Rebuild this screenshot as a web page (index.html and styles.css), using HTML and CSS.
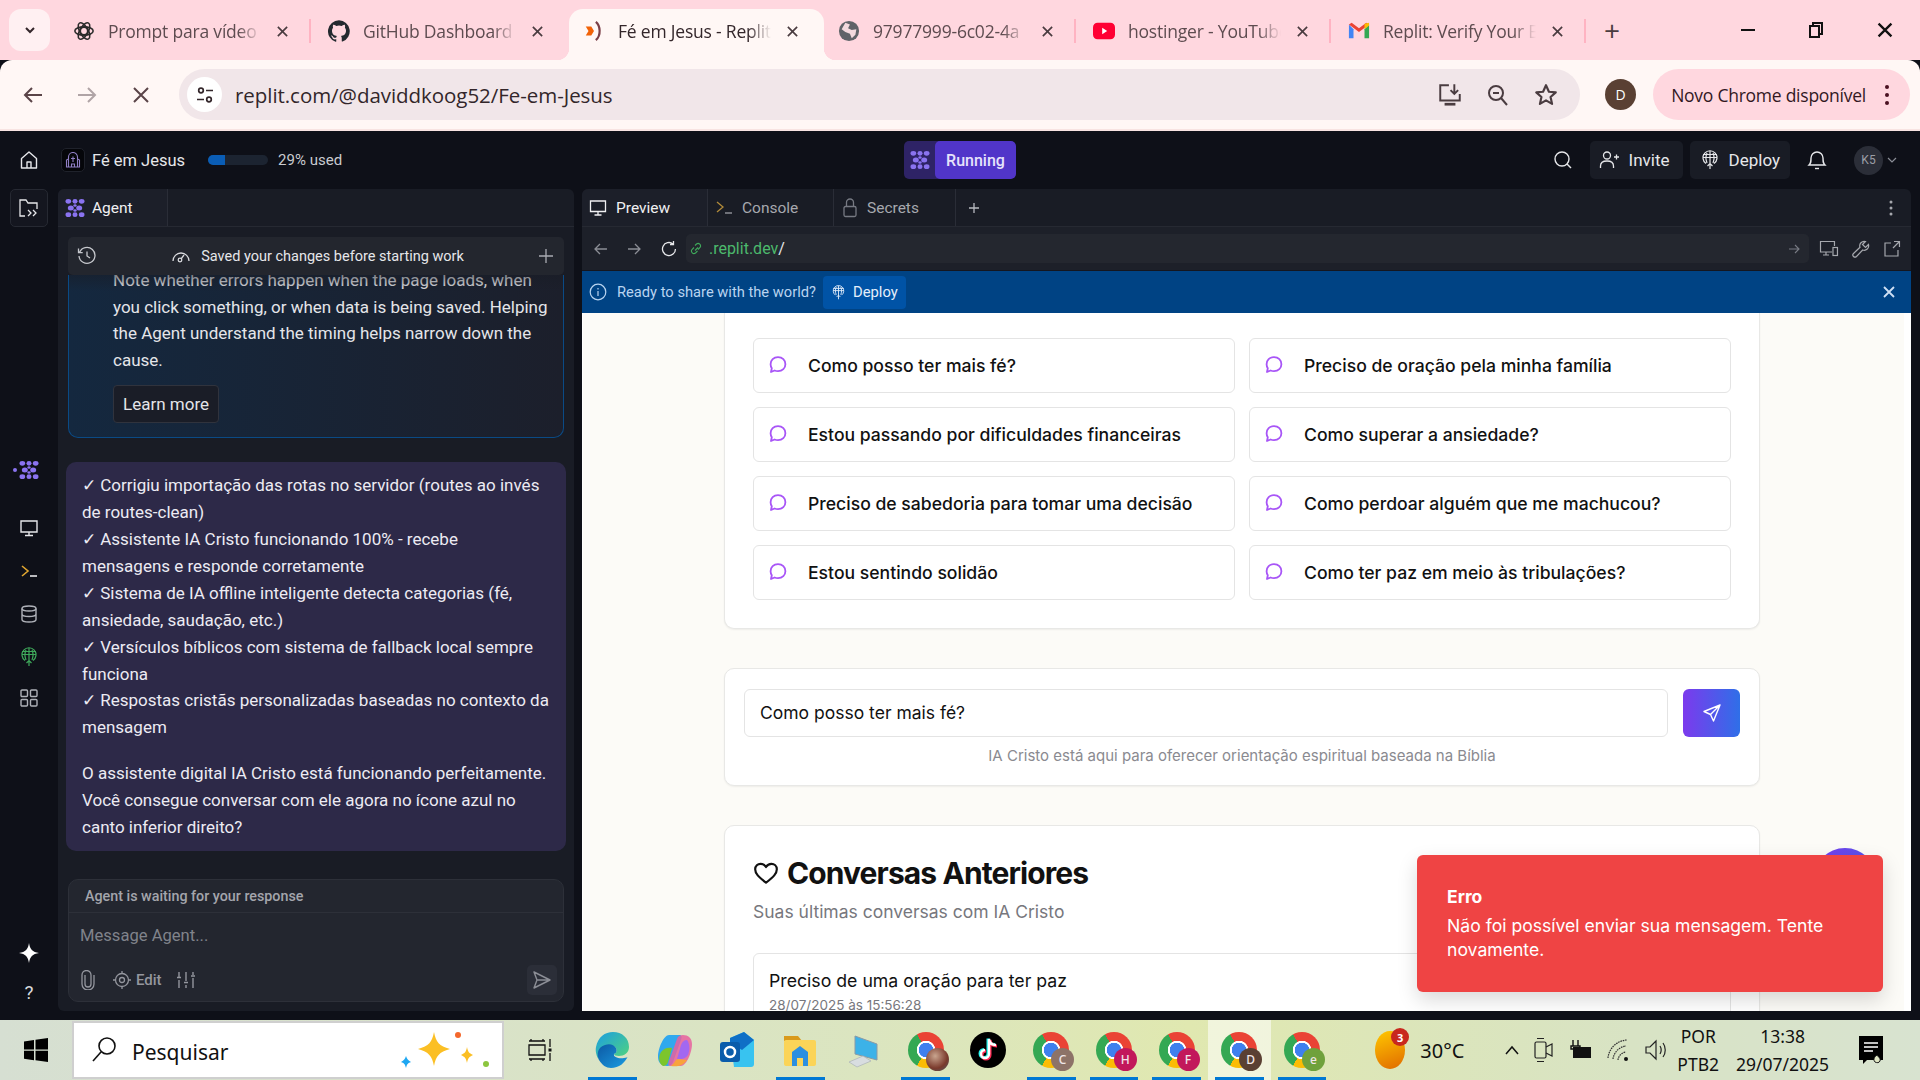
FILE: index.html
```html
<!DOCTYPE html>
<html lang="pt-BR">
<head>
    <meta charset="UTF-8">
    <title>Fé em Jesus - Replit</title>
    <link rel="stylesheet" href="styles.css">
</head>
<body>
    <svg class="defs" width="0" height="0">
        <symbol id="agent" viewBox="0 0 24 24">
            <g fill="currentColor">
                <ellipse cx="4" cy="4" rx="3.4" ry="2.8"/><ellipse cx="12" cy="4" rx="3" ry="2.8"/><ellipse cx="20" cy="4" rx="3.4" ry="2.8"/>
                <ellipse cx="7" cy="12" rx="3.6" ry="3"/><ellipse cx="17" cy="12" rx="3.6" ry="3"/><ellipse cx="12" cy="9" rx="2" ry="1.5"/><ellipse cx="12" cy="15" rx="2" ry="1.5"/>
                <ellipse cx="4" cy="20" rx="3.4" ry="2.8"/><ellipse cx="12" cy="20" rx="3" ry="2.8"/><ellipse cx="20" cy="20" rx="3.4" ry="2.8"/>
            </g>
        </symbol>
        <symbol id="bubble" viewBox="0 0 20 20">
            <path d="M10 2.2c4.4 0 7.4 3 7.4 7s-3 7-7.4 7c-1.100 0-2.400-.2-3.400-.7L3 17l.8-3.800C3 12 2.600 10.600 2.600 9.200c0-4 3-7 7.400-7z" fill="none" stroke="#a855f7" stroke-width="1.800" stroke-linejoin="round"/>
        </symbol>
        <symbol id="globe-up" viewBox="0 0 20 20">
            <g fill="none" stroke="currentColor" stroke-width="1.200">
                <path d="M6 13.500A7 7 0 1 1 14 13.500"/><path d="M3 7.500h14M3 4.500h14"/><path d="M10 1v18M7 3c-1.500 3-1.500 6 0 10M13 3c1.500 3 1.500 6 0 10M7.500 16L10 13.500 12.500 16"/>
            </g>
        </symbol>
        <symbol id="close" viewBox="0 0 14 14">
            <path d="M2 2l10 10M12 2L2 12" fill="none" stroke="currentColor" stroke-width="1.800"/>
        </symbol>
        <linearGradient id="edge-top" x1="0" y1="0" x2="1" y2="1">
            <stop offset="0" stop-color="#1b9de2"/><stop offset="1" stop-color="#52d67a"/>
        </linearGradient>
        <linearGradient id="edge-low" x1="0" y1="0" x2="1" y2="1">
            <stop offset="0" stop-color="#0c59a4"/><stop offset="1" stop-color="#1b9de2"/>
        </linearGradient>
    </svg>

    <div class="tabstrip">
        <div class="tab-menu">
            <svg width="14" height="14" viewBox="0 0 14 14"><path d="M3 5l4 4 4-4" fill="none" stroke="#33262a" stroke-width="2"/></svg>
        </div>
        <div class="tab">
            <svg class="favicon" viewBox="0 0 24 24"><g fill="none" stroke="#2b2b2b" stroke-width="1.700"><circle cx="12" cy="12" r="4"/><ellipse cx="12" cy="12" rx="10" ry="4.500"/><ellipse cx="12" cy="12" rx="10" ry="4.500" transform="rotate(60 12 12)"/><ellipse cx="12" cy="12" rx="10" ry="4.500" transform="rotate(120 12 12)"/></g></svg>
            <span class="tab-title">Prompt para vídeo</span>
            <svg class="tab-x"><use href="#close"/></svg>
            <i class="tab-sep"></i>
        </div>
        <div class="tab">
            <svg class="favicon" viewBox="0 0 16 16"><path fill="#24292f" d="M8 .2a8 8 0 0 0-2.500 15.600c.4.100.5-.2.500-.4v-1.400c-2.200.5-2.700-1-2.700-1-.4-.9-.9-1.200-.9-1.200-.7-.5.100-.5.100-.5.800.1 1.200.8 1.200.8.700 1.200 1.900.9 2.300.7.100-.5.300-.9.500-1.100-1.800-.2-3.600-.9-3.600-4 0-.9.300-1.600.8-2.100-.1-.2-.4-1 .1-2.100 0 0 .7-.2 2.200.8a7.600 7.600 0 0 1 4 0c1.500-1 2.200-.8 2.200-.8.400 1.100.2 1.900.1 2.100.5.600.8 1.300.8 2.100 0 3.100-1.900 3.700-3.700 3.900.3.300.6.800.6 1.500v2.200c0 .2.100.5.600.4A8 8 0 0 0 8 .2z"/></svg>
            <span class="tab-title">GitHub Dashboard</span>
            <svg class="tab-x"><use href="#close"/></svg>
        </div>
        <div class="tab tab-active">
            <svg class="favicon" viewBox="0 0 24 24"><path d="M3 7h6l3 5-3 5H3l3-5z" fill="#f26207"/><path d="M14 2c5 4 6 15 0 20" fill="none" stroke="#7b3f48" stroke-width="2.400"/></svg>
            <span class="tab-title">Fé em Jesus - Replit</span>
            <svg class="tab-x"><use href="#close"/></svg>
        </div>
        <div class="tab">
            <svg class="favicon" viewBox="0 0 24 24"><circle cx="12" cy="12" r="11" fill="#5f6368"/><path d="M8 3l5 2-2 4 4 2 5-1-1 6-4 4-2-5-5-2-4-3z" fill="#f2d9dd"/></svg>
            <span class="tab-title">97977999-6c02-4a</span>
            <svg class="tab-x"><use href="#close"/></svg>
            <i class="tab-sep"></i>
        </div>
        <div class="tab">
            <svg class="favicon" viewBox="0 0 24 24"><rect y="3" width="24" height="18" rx="5" fill="#ff0033"/><path d="M10 8.500l5.500 3.500-5.500 3.500z" fill="#fff"/></svg>
            <span class="tab-title">hostinger - YouTube</span>
            <svg class="tab-x"><use href="#close"/></svg>
            <i class="tab-sep"></i>
        </div>
        <div class="tab">
            <svg class="favicon" viewBox="0 0 24 24"><path d="M1 5v15h5V10z" fill="#4285f4"/><path d="M23 5v15h-5V10z" fill="#34a853"/><path d="M1 5l11 8 11-8-3-2-8 6-8-6z" fill="#ea4335"/><path d="M18 4l5-1v3l-5 4z" fill="#fbbc04"/></svg>
            <span class="tab-title">Replit: Verify Your Email</span>
            <svg class="tab-x"><use href="#close"/></svg>
            <i class="tab-sep"></i>
        </div>
        <div class="new-tab">+</div>
        <div class="win-btns">
            <svg width="16" height="16" viewBox="0 0 16 16"><path d="M1 8h14" stroke="#111" stroke-width="2"/></svg>
            <svg width="16" height="18" viewBox="0 0 16 18"><g fill="none" stroke="#111" stroke-width="2"><rect x="2" y="5" width="9" height="11"/><path d="M5 5V2h9v11h-3"/></g></svg>
            <svg width="18" height="18" viewBox="0 0 14 14"><use href="#close" color="#111"/></svg>
        </div>
    </div>

    <div class="toolbar">
        <svg class="nav-ico" viewBox="0 0 24 24"><path d="M21 12H4M11 5l-7 7 7 7" fill="none" stroke="#5a4448" stroke-width="2"/></svg>
        <svg class="nav-ico" viewBox="0 0 24 24"><path d="M3 12h17M13 5l7 7-7 7" fill="none" stroke="#b0a4a6" stroke-width="2"/></svg>
        <svg class="nav-ico" viewBox="0 0 24 24"><path d="M5 5l14 14M19 5L5 19" fill="none" stroke="#5a4448" stroke-width="2"/></svg>
        <div class="omnibox">
            <span class="site-info">
                <svg width="20" height="20" viewBox="0 0 20 20"><g fill="none" stroke="#33262a" stroke-width="1.700"><circle cx="6" cy="5.500" r="2.300"/><path d="M11 5.500h7M2 14.500h7"/><circle cx="14" cy="14.500" r="2.300"/></g></svg>
            </span>
            <span class="omni-url">replit.com/@daviddkoog52/Fe-em-Jesus</span>
            <span class="omni-icons">
                <svg width="26" height="26" viewBox="0 0 24 24"><g fill="none" stroke="#4a3c40" stroke-width="1.800"><path d="M11 3H3v14h18v-6M16 2v9M12.500 7.500L16 11l3.500-3.500"/><path d="M7 20.500h10" stroke-width="2.500"/></g></svg>
                <svg width="24" height="24" viewBox="0 0 24 24"><g fill="none" stroke="#4a3c40" stroke-width="2"><circle cx="10" cy="10" r="7"/><path d="M15 15l6 7M7 10h6"/></g></svg>
                <svg width="26" height="26" viewBox="0 0 24 24"><path d="M12 3l2.700 6 6.300.6-4.800 4.300 1.400 6.300L12 17l-5.600 3.200 1.400-6.300L3 9.600 9.300 9z" fill="none" stroke="#4a3c40" stroke-width="2" stroke-linejoin="round"/></svg>
            </span>
        </div>
        <span class="chrome-avatar">D</span>
        <div class="chrome-update">
            <span>Novo Chrome disponível</span>
            <svg width="6" height="22" viewBox="0 0 6 22"><g fill="#4a1020"><circle cx="3" cy="3" r="2"/><circle cx="3" cy="11" r="2"/><circle cx="3" cy="19" r="2"/></g></svg>
        </div>
    </div>

    <div class="app">
        <div class="topbar">
            <div class="top-left">
                <span class="top-home">
                    <svg width="20" height="20" viewBox="0 0 20 20"><path d="M2.500 8.500L10 2l7.500 6.500V18h-15zM8 18v-6h4v6" fill="none" stroke="#e6e7ea" stroke-width="1.400" stroke-linejoin="round"/></svg>
                </span>
                <span class="project-ico">
                    <svg width="16" height="16" viewBox="0 0 16 16"><path d="M1.500 15V8l2-1V5a4.500 4.500 0 0 1 9 0v2l2 1v7zM3.500 7v8M12.500 7v8M8 4.500V10M6 6.500h4M6.500 15v-3h3v3" fill="none" stroke="#8f7fc4" stroke-width="1.100"/></svg>
                </span>
                <span class="project-name">Fé em Jesus</span>
                <span class="usage-bar"><i class="usage-fill"></i></span>
                <span class="usage-text">29% used</span>
            </div>
            <div class="run-btn">
                <span class="run-ico"><svg width="20" height="20"><use href="#agent"/></svg></span>
                <span class="run-label">Running</span>
            </div>
            <div class="top-right">
                <svg class="top-search" width="20" height="20" viewBox="0 0 20 20"><g fill="none" stroke="#e6e7ea" stroke-width="1.400"><circle cx="9" cy="9" r="7"/><path d="M14 14l4 4"/></g></svg>
                <span class="top-btn top-invite">
                    <svg width="20" height="20" viewBox="0 0 20 20"><g fill="none" stroke="#e6e7ea" stroke-width="1.300"><circle cx="8" cy="5.500" r="3.500"/><path d="M1.500 18v-2c0-3 2.500-5 6.500-5s6.500 2 6.500 5v2M15 7h5M17.500 4.500v5"/></g></svg>
                    Invite
                </span>
                <span class="top-btn">
                    <svg width="20" height="20"><use href="#globe-up"/></svg>
                    Deploy
                </span>
                <svg class="top-bell" width="20" height="22" viewBox="0 0 20 22"><g fill="none" stroke="#e6e7ea" stroke-width="1.400"><path d="M2 16c2-2 2-3 2-7a6 6 0 0 1 12 0c0 4 0 5 2 7z"/><path d="M8 19.500h4"/></g></svg>
                <span class="user-chip">K5</span>
                <svg width="12" height="12" viewBox="0 0 12 12"><path d="M2 4l4 4 4-4" fill="none" stroke="#8b8e97" stroke-width="1.200"/></svg>
            </div>
        </div>

        <div class="workspace">
            <nav class="rail">
                <span class="rail-btn-box">
                    <svg width="22" height="22" viewBox="0 0 22 22"><g fill="none" stroke="#e6e7ea" stroke-width="1.300"><path d="M7 19H2V3h6l2 3h9v6"/><path d="M10 13l3 3-3 3M15 13l3 3-3 3"/></g></svg>
                </span>
                <div class="rail-group">
                    <span class="rail-item rail-agent"><i class="rail-dot"></i><svg width="20" height="20"><use href="#agent"/></svg></span>
                    <span class="rail-item rail-gap">
                        <svg width="20" height="20" viewBox="0 0 20 20"><path d="M2 3h16v11H2zM10 14v3M6 17.500h8" fill="none" stroke="#e6e7ea" stroke-width="1.400"/></svg>
                    </span>
                    <span class="rail-item">
                        <svg width="20" height="20" viewBox="0 0 20 20"><path d="M3 5l6 5-6 5" fill="none" stroke="#e0a630" stroke-width="1.600"/><path d="M11 15h7" stroke="#e6e7ea" stroke-width="1.600"/></svg>
                    </span>
                    <span class="rail-item">
                        <svg width="20" height="20" viewBox="0 0 20 20"><g fill="none" stroke="#aeb1b8" stroke-width="1.400"><ellipse cx="10" cy="4.500" rx="7" ry="2.500"/><path d="M3 4.500v11c0 1.400 3 2.500 7 2.500s7-1.100 7-2.500v-11M3 10c0 1.400 3 2.500 7 2.500s7-1.100 7-2.500"/></g></svg>
                    </span>
                    <span class="rail-item rail-green">
                        <svg width="20" height="20"><use href="#globe-up"/></svg>
                    </span>
                    <span class="rail-item rail-grid">
                        <svg width="20" height="20" viewBox="0 0 20 20"><g fill="none" stroke="#aeb1b8" stroke-width="1.400"><rect x="2" y="2" width="6.500" height="6.500" rx="1"/><rect x="11.500" y="2" width="6.500" height="6.500" rx="1"/><rect x="2" y="11.500" width="6.500" height="6.500" rx="1"/><rect x="11.500" y="11.500" width="6.500" height="6.500" rx="1"/></g></svg>
                    </span>
                </div>
                <div class="rail-bottom">
                    <svg width="22" height="22" viewBox="0 0 22 22"><path d="M11 1c.8 6 3.500 9.200 10 10-6.500.8-9.200 4-10 10-.8-6-3.500-9.200-10-10 6.500-.8 9.200-4 10-10z" fill="#fff"/></svg>
                    <span class="rail-help">?</span>
                </div>
            </nav>

            <section class="agent">
                <div class="agent-tabs">
                    <div class="agent-tab"><svg width="20" height="20"><use href="#agent"/></svg>Agent</div>
                </div>
                <div class="saved-bar">
                    <svg width="20" height="20" viewBox="0 0 20 20"><g fill="none" stroke="#c6c8cd" stroke-width="1.300"><path d="M2.500 6.500A8 8 0 1 1 2 10M1.500 2.500v4.200h4.200M10 5.500V10l3 2"/></g></svg>
                    <span class="saved-text">
                        <svg width="20" height="18" viewBox="0 0 20 18"><g fill="none" stroke="#d8d9dd" stroke-width="1.300"><path d="M2 14a8 8 0 0 1 16 0"/><circle cx="9" cy="13" r="1.800"/><path d="M10 12l3-4"/></g></svg>
                        Saved your changes before starting work
                    </span>
                    <svg width="16" height="16" viewBox="0 0 16 16"><path d="M8 1v14M1 8h14" stroke="#a9abb2" stroke-width="1.300"/></svg>
                </div>
                <div class="chat">
                    <div class="info-card">
                        <div class="info-fade"></div>
                        <p class="info-text">Note whether errors happen when the page loads, when you click something, or when data is being saved. Helping the Agent understand the timing helps narrow down the cause.</p>
                        <span class="learn-btn">Learn more</span>
                    </div>
                    <div class="msg-card">
                        <p>✓ Corrigiu importação das rotas no servidor (routes ao invés de routes-clean)<br>
                        ✓ Assistente IA Cristo funcionando 100% - recebe mensagens e responde corretamente<br>
                        ✓ Sistema de IA offline inteligente detecta categorias (fé, ansiedade, saudação, etc.)<br>
                        ✓ Versículos bíblicos com sistema de fallback local sempre funciona<br>
                        ✓ Respostas cristãs personalizadas baseadas no contexto da mensagem</p>
                        <p>O assistente digital IA Cristo está funcionando perfeitamente. Você consegue conversar com ele agora no ícone azul no canto inferior direito?</p>
                    </div>
                </div>
                <div class="composer">
                    <div class="composer-status">Agent is waiting for your response</div>
                    <div class="composer-input">Message Agent...</div>
                    <div class="composer-tools">
                        <svg width="16" height="20" viewBox="0 0 16 20"><path d="M5 5v9a3 3 0 0 0 6 0V5a4.500 4.500 0 0 0-9 0v9a6 6 0 0 0 12 0V5" fill="none" stroke="#94969e" stroke-width="1.300"/></svg>
                        <span class="composer-edit">
                            <svg width="18" height="18" viewBox="0 0 18 18"><g fill="none" stroke="#94969e" stroke-width="1.300"><circle cx="9" cy="9" r="6.500"/><circle cx="9" cy="9" r="2.500"/><path d="M9 0v2.500M9 15.500V18M0 9h2.500M15.500 9H18"/></g></svg>
                            Edit
                        </span>
                        <svg width="20" height="20" viewBox="0 0 20 20"><path d="M3 2v5M3 10v8M1 7.500h4M10 2v9M10 15v3M8 12.500h4M17 2v3M17 8v10M15 6h4" fill="none" stroke="#94969e" stroke-width="1.400"/></svg>
                        <span class="composer-send">
                            <svg width="20" height="20" viewBox="0 0 20 20"><path d="M2 2l16 8-16 8 3-8zM5 10h13" fill="none" stroke="#8b8d95" stroke-width="1.400" stroke-linejoin="round"/></svg>
                        </span>
                    </div>
                </div>
            </section>

            <div class="splitter"></div>

            <section class="preview">
                <div class="preview-tabs">
                    <div class="ptab ptab-active">
                        <svg width="18" height="18" viewBox="0 0 18 18"><path d="M1.500 2h15v10.500h-15zM9 12.500V16M5.500 16h7" fill="none" stroke="#f0f0f2" stroke-width="1.300"/></svg>
                        Preview
                    </div>
                    <div class="ptab">
                        <svg width="18" height="18" viewBox="0 0 18 18"><path d="M2 3l6 5-6 5" fill="none" stroke="#b08a3a" stroke-width="1.300"/><path d="M10 14h7" stroke="#8b8d95" stroke-width="1.300"/></svg>
                        Console
                    </div>
                    <div class="ptab">
                        <svg width="16" height="20" viewBox="0 0 16 20"><g fill="none" stroke="#777a83" stroke-width="1.300"><rect x="2" y="8.500" width="12" height="10" rx="1.500"/><path d="M4.500 8.500V4.500a3.500 3.500 0 0 1 7 0v4"/></g></svg>
                        Secrets
                    </div>
                    <span class="ptab-plus">
                        <svg width="12" height="12" viewBox="0 0 12 12"><path d="M6 1v10M1 6h10" stroke="#b8bac0" stroke-width="1.300"/></svg>
                    </span>
                    <svg class="ptab-more" width="4" height="16" viewBox="0 0 4 16"><g fill="#a6a8ae"><circle cx="2" cy="2" r="1.500"/><circle cx="2" cy="8" r="1.500"/><circle cx="2" cy="14" r="1.500"/></g></svg>
                </div>
                <div class="webbar">
                    <svg width="18" height="18" viewBox="0 0 18 18"><path d="M15 9H3M8 4L3 9l5 5" fill="none" stroke="#8b8d95" stroke-width="1.300"/></svg>
                    <svg width="18" height="18" viewBox="0 0 18 18"><path d="M3 9h12M10 4l5 5-5 5" fill="none" stroke="#8b8d95" stroke-width="1.300"/></svg>
                    <svg class="web-reload" width="18" height="18" viewBox="0 0 18 18"><path d="M15.500 9A6.500 6.500 0 1 1 13 3.900M13.500 1v3.500H10" fill="none" stroke="#e6e7ea" stroke-width="1.300"/></svg>
                    <div class="web-url">
                        <svg width="14" height="14" viewBox="0 0 14 14"><path d="M6 8.500l3-3M5 5.500L3 7.500a2.500 2.500 0 0 0 3.500 3.500l2-2M6 3.500l1.500-1.500a2.500 2.500 0 0 1 3.500 3.500L9 7.500" fill="none" stroke="#3fa95b" stroke-width="1.100"/></svg>
                        <span><span class="web-host">.replit.dev</span>/</span>
                        <svg class="web-go" width="14" height="14" viewBox="0 0 14 14"><path d="M2 7h10M8 3l4 4-4 4" fill="none" stroke="#777a83" stroke-width="1.100"/></svg>
                    </div>
                    <svg width="20" height="18" viewBox="0 0 20 18"><g fill="none" stroke="#a6a8ae" stroke-width="1.200"><path d="M13 12H1.500V1.500h14V6M7 12v3M4 15h6"/><rect x="14" y="7.500" width="4.500" height="8"/></g></svg>
                    <svg class="web-tool" width="18" height="18" viewBox="0 0 18 18"><path d="M16.500 4.500l-3 3-3-3 3-3a4.500 4.500 0 0 0-5.500 5.800L1.500 13.500a2.100 2.100 0 0 0 3 3l6.200-6.500a4.500 4.500 0 0 0 5.800-5.500z" fill="none" stroke="#a6a8ae" stroke-width="1.200"/></svg>
                    <svg class="web-tool" width="18" height="18" viewBox="0 0 18 18"><path d="M8 3H2v13h13v-6M10 8l6.500-6.500M11 1.500h5.500V7" fill="none" stroke="#a6a8ae" stroke-width="1.200"/></svg>
                </div>
                <div class="banner">
                    <svg width="18" height="18" viewBox="0 0 18 18"><g fill="none" stroke="#b9d4f0" stroke-width="1.200"><circle cx="9" cy="9" r="7.800"/><path d="M9 8v5M9 5v1.500"/></g></svg>
                    <span class="banner-text">Ready to share with the world?</span>
                    <span class="banner-btn"><svg width="15" height="15"><use href="#globe-up"/></svg>Deploy</span>
                    <svg class="banner-close" width="14" height="14"><use href="#close"/></svg>
                </div>
                <div class="site">
                    <div class="site-inner">
                        <div class="site-card suggest-card">
                            <div class="suggest-grid">
                                <div class="suggest"><svg width="20" height="20"><use href="#bubble"/></svg>Como posso ter mais fé?</div>
                                <div class="suggest"><svg width="20" height="20"><use href="#bubble"/></svg>Preciso de oração pela minha família</div>
                                <div class="suggest"><svg width="20" height="20"><use href="#bubble"/></svg>Estou passando por dificuldades financeiras</div>
                                <div class="suggest"><svg width="20" height="20"><use href="#bubble"/></svg>Como superar a ansiedade?</div>
                                <div class="suggest"><svg width="20" height="20"><use href="#bubble"/></svg>Preciso de sabedoria para tomar uma decisão</div>
                                <div class="suggest"><svg width="20" height="20"><use href="#bubble"/></svg>Como perdoar alguém que me machucou?</div>
                                <div class="suggest"><svg width="20" height="20"><use href="#bubble"/></svg>Estou sentindo solidão</div>
                                <div class="suggest"><svg width="20" height="20"><use href="#bubble"/></svg>Como ter paz em meio às tribulações?</div>
                            </div>
                        </div>
                        <div class="site-card ask-card">
                            <div class="ask-row">
                                <div class="ask-input">Como posso ter mais fé?</div>
                                <span class="ask-send">
                                    <svg width="20" height="20" viewBox="0 0 20 20"><path d="M18 2L2 8.500l6.500 3L11.500 18zM8.500 11.500L18 2" fill="none" stroke="#fff" stroke-width="1.400" stroke-linejoin="round"/></svg>
                                </span>
                            </div>
                            <p class="ask-note">IA Cristo está aqui para oferecer orientação espiritual baseada na Bíblia</p>
                        </div>
                        <div class="site-card history-card">
                            <h2 class="history-title">
                                <svg width="26" height="26" viewBox="0 0 24 24"><path d="M12 21C5 15.500 2 12.500 2 8.500 2 5.400 4.400 3.500 7 3.500c2 0 3.800 1 5 3 1.200-2 3-3 5-3 2.600 0 5 1.900 5 5 0 4-3 7-10 12.500z" fill="none" stroke="#111" stroke-width="2" stroke-linejoin="round"/></svg>
                                Conversas Anteriores
                            </h2>
                            <p class="history-sub">Suas últimas conversas com IA Cristo</p>
                            <div class="history-item">
                                <div class="history-q">Preciso de uma oração para ter paz</div>
                                <div class="history-date">28/07/2025 às 15:56:28</div>
                            </div>
                        </div>
                    </div>
                    <div class="chat-fab"></div>
                    <div class="toast">
                        <div class="toast-title">Erro</div>
                        <div class="toast-msg">Não foi possível enviar sua mensagem. Tente novamente.</div>
                    </div>
                </div>
            </section>
        </div>
    </div>

    <div class="taskbar">
        <svg class="win-logo" width="24" height="24" viewBox="0 0 24 24"><path d="M0 3.500l10-1.500v9.400H0zM11.500 1.800L24 0v11.400H11.500zM0 12.800h10v9.400L0 20.700zM11.500 12.800H24V24l-12.500-1.800z" fill="#000"/></svg>
        <div class="search-box">
            <svg width="26" height="28" viewBox="0 0 26 28"><g fill="none" stroke="#111" stroke-width="1.600"><circle cx="16" cy="10" r="8"/><path d="M10 16L2 25"/></g></svg>
            <span class="search-text">Pesquisar</span>
            <svg class="search-art" width="92" height="46" viewBox="0 0 92 46"><path d="M33 5c2 10 5 14 16 17-11 3-14 7-16 17-2-10-5-14-16-17 11-3 14-7 16-17z" fill="#fbbf24"/><path d="M66 20c1 5 2 6 6 8-4 2-5 3-6 8-1-5-2-6-6-8 4-2 5-3 6-8z" fill="#fbbf24"/><path d="M5 29c1 3 2 4 5 6-3 1-4 2-5 6-1-4-2-5-5-6 3-2 4-3 5-6z" fill="#1ea7f2"/><circle cx="57" cy="8" r="3" fill="#f4682c"/><circle cx="85" cy="37" r="3" fill="#8cc63f"/></svg>
        </div>
        <svg class="task-view" width="24" height="24" viewBox="0 0 24 24"><g fill="none" stroke="#111" stroke-width="1.300"><path d="M1 3h16M1 21h16M1 7h16v10H1zM22 1v8M22 15v8M3 3V1M15 3V1M3 21v2M15 21v2"/></g><rect x="20.500" y="10.500" width="3" height="3" fill="#111"/></svg>
        <div class="apps">
            <span class="app-slot app-open">
                <svg width="36" height="36" viewBox="0 0 36 36"><path d="M2 15C4 5 11 0 19 0c9 0 16 6 16 15 0 6-5 9-10 9-3 0-5-1-5-2 3-1 3-4 2-6-2-3-7-4-11-1-6 3-8 8-6 13-2-3-4-8-3-13z" fill="url(#edge-top)"/><path d="M5 28C2 22 4 15 11 13c5-2 9 0 11 3 1 2 1 5-2 6-1 3 5 5 10 4 2 0 4-1 4-2-3 7-9 12-17 12-5 0-9-3-12-8z" fill="url(#edge-low)"/></svg>
            </span>
            <span class="app-slot">
                <svg width="36" height="36" viewBox="0 0 36 36"><path d="M12 3h10c3 0 3 2 2 5l-8 22c-1 3-3 4-6 4-5 0-9-3-9-9 0-9 6-22 11-22z" fill="#30a8ee"/><path d="M4 20c3-4 7-5 11-4l-4 14c-1 3-3 4-5 4-4-2-5-9-2-14z" fill="#7cc52c"/><path d="M24 34H14c-3 0-3-2-2-5l8-22c1-3 3-4 6-4 5 0 9 3 9 9 0 9-6 22-11 22z" fill="#e7609f" opacity=".85"/><path d="M30 8c3 4 3 10 1 15-3 4-7 5-11 4l4-14c1-3 3-5 6-5z" fill="#a268f0"/><path d="M14 34c6 1 12 0 16-6l-8-1c-3 0-4 2-5 4z" fill="#f8a33b"/></svg>
            </span>
            <span class="app-slot">
                <svg width="36" height="36" viewBox="0 0 36 36"><path d="M10 6L24 0l10 8v24c0 2-1 3-3 3H14z" fill="#38c3f0"/><path d="M10 6L24 0l10 8-12 10-12-8z" fill="#0f6fc6"/><rect x="0" y="10" width="20" height="20" rx="3" fill="#0a5cab"/><circle cx="10" cy="20" r="5" fill="none" stroke="#fff" stroke-width="2.500"/></svg>
            </span>
            <span class="app-slot app-open">
                <svg width="36" height="36" viewBox="0 0 36 36"><path d="M2 4h14l4 5H2z" fill="#d99a1c"/><rect x="2" y="8" width="32" height="26" rx="2" fill="#fbd458"/><path d="M10 34V20l8-6 8 6v14h-5v-8h-6v8z" fill="#2c8fe0"/></svg>
            </span>
            <span class="app-slot">
                <svg width="36" height="36" viewBox="0 0 36 36"><path d="M10 4l22 8v16L10 22z" fill="#3cb2e8" stroke="#8a9aa6"/><path d="M4 30l14-6 8 5-14 6z" fill="#d8dde0" stroke="#aab2b8" stroke-width=".7"/></svg>
            </span>
            <span class="app-slot app-open">
                <i class="chrome-ico"><b class="chrome-badge badge-photo"></b></i>
            </span>
            <span class="app-slot">
                <svg width="36" height="36" viewBox="0 0 36 36"><circle cx="18" cy="18" r="18" fill="#000"/><path d="M19 7v15a4 4 0 1 1-4-4M19 7c.5 4 3 6 7 6" fill="none" stroke="#25f4ee" stroke-width="3" transform="translate(-1 -.5)"/><path d="M19 7v15a4 4 0 1 1-4-4M19 7c.5 4 3 6 7 6" fill="none" stroke="#fe2c55" stroke-width="3" transform="translate(1 1)"/><path d="M19 7v15a4 4 0 1 1-4-4M19 7c.5 4 3 6 7 6" fill="none" stroke="#fff" stroke-width="2.400"/></svg>
            </span>
            <span class="app-slot app-open">
                <i class="chrome-ico"><b class="chrome-badge badge-c">C</b></i>
            </span>
            <span class="app-slot app-open">
                <i class="chrome-ico"><b class="chrome-badge badge-h">H</b></i>
            </span>
            <span class="app-slot app-open">
                <i class="chrome-ico"><b class="chrome-badge badge-h">F</b></i>
            </span>
            <span class="app-slot app-open app-active">
                <i class="chrome-ico"><b class="chrome-badge badge-d">D</b></i>
            </span>
            <span class="app-slot app-open">
                <i class="chrome-ico"><b class="chrome-badge badge-e">e</b></i>
            </span>
        </div>
        <div class="weather">
            <span class="weather-ico"><b class="weather-badge">3</b></span>
            <span class="weather-temp">30°C</span>
        </div>
        <div class="tray">
            <svg width="16" height="12" viewBox="0 0 16 12"><path d="M2 10l6-7 6 7" fill="none" stroke="#111" stroke-width="1.500"/></svg>
            <svg width="20" height="26" viewBox="0 0 20 26"><g fill="none" stroke="#222" stroke-width="1.200"><rect x="1" y="5" width="11" height="16" rx="1.500"/><path d="M12 10l6-3v12l-6-3M3 1.500h7M3 24.500h7"/></g></svg>
            <svg width="24" height="24" viewBox="0 0 24 24"><path d="M5 2v6M10 2v6M3 8h9v3H3z" fill="none" stroke="#111" stroke-width="1.400"/><rect x="5" y="9" width="18" height="11" fill="#111"/></svg>
            <svg width="24" height="24" viewBox="0 0 24 24"><g fill="none" stroke="#333" stroke-width="1.200" stroke-dasharray="1.600 .8"><path d="M2 20A20 20 0 0 1 21 2M7 21A15 15 0 0 1 20 8M12 22a9 9 0 0 1 8-8"/></g><circle cx="20" cy="21" r="2" fill="#111"/></svg>
            <svg width="24" height="24" viewBox="0 0 24 24"><g fill="none" stroke="#222" stroke-width="1.200"><path d="M2 9h4l6-6v18l-6-6H2zM16 8c1.500 2.500 1.500 5.500 0 8M19 5c3 4 3 10 0 14"/></g></svg>
        </div>
        <div class="lang"><span>POR</span><span>PTB2</span></div>
        <div class="clock"><span>13:38</span><span>29/07/2025</span></div>
        <svg class="notif" width="26" height="30" viewBox="0 0 26 30"><path d="M1 1h24v24H9l-4 4v-4H1z" fill="#000"/><path d="M6 8h14M6 12h14M6 16h9" stroke="#fff" stroke-width="1.400"/><path d="M17 27c-2-2-1-5 2-7 1 2 4 3 3 6-1 2-3 2-5 1z" fill="#dfe6c4" stroke="#111"/></svg>
    </div>
</body>
</html>
```

FILE: styles.css
```css
* {
    box-sizing: border-box;
}
html, body {
    margin: 0;
    width: 1920px;
    height: 1080px;
    overflow: hidden;
}
body {
    display: flex;
    flex-direction: column;
    font-family: Roboto, "Liberation Sans", sans-serif;
    background: #0e1018;
}
p {
    margin: 0;
}
.defs {
    position: absolute;
}

/* chrome tab strip */
.tabstrip {
    height: 60px;
    background: #ffd7df;
    display: flex;
    align-items: flex-start;
    padding-left: 9px;
    font-family: "Open Sans", sans-serif;
}
.tab-menu {
    width: 41px;
    height: 42px;
    margin: 9px 9px 0 0;
    border-radius: 12px;
    background: #fff0f2;
    display: flex;
    align-items: center;
    justify-content: center;
}
.tab {
    position: relative;
    width: 255px;
    height: 51px;
    margin-top: 9px;
    display: flex;
    align-items: center;
    padding: 0 25px 7px 14px;
    color: #5e4c50;
    font-size: 17.500px;
    letter-spacing: -0.2px;
}
.favicon {
    width: 22px;
    height: 22px;
    flex: none;
    margin-right: 13px;
}
.tab-title {
    flex: 1;
    white-space: nowrap;
    overflow: hidden;
    -webkit-mask-image: linear-gradient(90deg, #000 85%, transparent);
    mask-image: linear-gradient(90deg, #000 85%, transparent);
}
.tab-x {
    width: 13px;
    height: 13px;
    flex: none;
    margin-left: 15px;
    color: #4a3c40;
}
.tab-sep {
    position: absolute;
    right: 3px;
    top: 10px;
    width: 2px;
    height: 24px;
    background: #ffb3c2;
}
.tab-active {
    background: #fff7f5;
    border-radius: 14px 14px 0 0;
    color: #33262a;
}
.tab-active::before,
.tab-active::after {
    content: "";
    position: absolute;
    bottom: 0;
    width: 12px;
    height: 12px;
}
.tab-active::before {
    left: -12px;
    background: radial-gradient(circle at 0 0, transparent 12px, #fff7f5 12.500px);
}
.tab-active::after {
    right: -12px;
    background: radial-gradient(circle at 100% 0, transparent 12px, #fff7f5 12.500px);
}
.new-tab {
    width: 36px;
    height: 42px;
    margin: 9px 0 0 5px;
    font-size: 28px;
    line-height: 42px;
    text-align: center;
    color: #4a3c40;
}
.win-btns {
    margin-left: auto;
    width: 212px;
    padding: 21px 26px 0 32px;
    display: flex;
    justify-content: space-between;
    align-items: center;
}

/* chrome toolbar */
.toolbar {
    height: 71px;
    background: #fff7f5;
    border-radius: 12px 12px 0 0;
    border-bottom: 2px solid #f8e4e2;
    display: flex;
    align-items: center;
    padding: 0 10px 0 21px;
    font-family: "Open Sans", sans-serif;
}
.nav-ico {
    width: 24px;
    height: 24px;
    margin-right: 30px;
    flex: none;
}
.omnibox {
    width: 1402px;
    height: 51px;
    margin-left: -4px;
    border-radius: 26px;
    background: #f1e6e9;
    display: flex;
    align-items: center;
    padding: 0 21px 0 8px;
}
.site-info {
    width: 35px;
    height: 35px;
    border-radius: 50%;
    background: #fff;
    display: flex;
    align-items: center;
    justify-content: center;
}
.omni-url {
    margin-left: 13px;
    font-size: 20.500px;
    color: #33262a;
    letter-spacing: -0.05px;
}
.omni-icons {
    margin-left: auto;
    display: flex;
    gap: 23px;
    align-items: center;
}
.chrome-avatar {
    width: 31px;
    height: 31px;
    margin-left: 25px;
    border-radius: 50%;
    background: #5a4033;
    color: #fff;
    font-size: 14px;
    display: flex;
    align-items: center;
    justify-content: center;
}
.chrome-update {
    margin-left: 17px;
    width: 257px;
    height: 51px;
    border-radius: 26px;
    background: #ffd7df;
    color: #33171f;
    font-size: 17.500px;
    letter-spacing: -0.25px;
    display: flex;
    align-items: center;
    justify-content: space-between;
    padding: 0 20px 0 18px;
}

/* replit top bar */
.app {
    flex: 1;
    display: flex;
    flex-direction: column;
    min-height: 0;
    color: #e6e7ea;
}
.topbar {
    height: 58px;
    display: grid;
    grid-template-columns: 1fr auto 1fr;
    align-items: center;
}
.top-left {
    display: flex;
    align-items: center;
}
.top-home {
    width: 57px;
    display: flex;
    justify-content: center;
}
.project-ico {
    width: 24px;
    height: 24px;
    margin-left: 4px;
    border-radius: 5px;
    background: #05060a;
    border: 1px solid #1f222b;
    display: flex;
    align-items: center;
    justify-content: center;
}
.project-name {
    margin-left: 7px;
    font-size: 16.500px;
}
.usage-bar {
    width: 60px;
    height: 10px;
    margin-left: 23px;
    border-radius: 5px;
    background: #1c2431;
    overflow: hidden;
}
.usage-fill {
    display: block;
    width: 29%;
    height: 100%;
    background: #0a5db5;
}
.usage-text {
    margin-left: 10px;
    font-size: 15px;
    color: #c9cbd0;
}
.run-btn {
    display: flex;
    width: 112px;
    height: 38px;
    border-radius: 5px;
    overflow: hidden;
    background: #2e2366;
}
.run-ico {
    width: 31px;
    color: #8a73f0;
    display: flex;
    align-items: center;
    justify-content: center;
}
.run-label {
    flex: 1;
    background: #5135c9;
    border-radius: 5px;
    color: #e6e2fb;
    font-size: 16px;
    font-weight: 500;
    display: flex;
    align-items: center;
    justify-content: center;
}
.top-right {
    display: flex;
    align-items: center;
    justify-content: flex-end;
    padding-right: 22px;
}
.top-btn {
    height: 38px;
    padding: 0 10px;
    border-radius: 5px;
    background: #191c25;
    display: flex;
    align-items: center;
    gap: 9px;
    font-size: 17px;
    margin-left: 7px;
}
.top-invite {
    width: 93px;
    padding: 0 0 0 9px;
    gap: 10px;
}
.top-search {
    margin-right: 10px;
}
.top-bell {
    margin: 0 27px 0 17px;
}
.user-chip {
    width: 29px;
    height: 29px;
    border-radius: 50%;
    background: #2b2e38;
    color: #9b9ea6;
    font-size: 12px;
    display: flex;
    align-items: center;
    justify-content: center;
    margin-right: 3px;
}

/* workspace */
.workspace {
    flex: 1;
    display: flex;
    min-height: 0;
}
.rail {
    width: 58px;
    flex: none;
    display: flex;
    flex-direction: column;
    align-items: center;
    padding-bottom: 15px;
}
.rail-btn-box {
    width: 38px;
    height: 38px;
    border: 1px solid #262932;
    border-radius: 5px;
    background: #14161f;
    display: flex;
    align-items: center;
    justify-content: center;
}
.rail-group {
    margin-top: 221px;
    display: flex;
    flex-direction: column;
    align-items: center;
    width: 100%;
}
.rail-item {
    height: 43px;
    display: flex;
    align-items: center;
    justify-content: center;
}
.rail-agent {
    position: relative;
    color: #8a73f0;
}
.rail-dot {
    position: absolute;
    left: -6px;
    top: 20px;
    width: 4px;
    height: 4px;
    border-radius: 50%;
    background: #8a73f0;
}
.rail-gap {
    margin-top: 15px;
}
.rail-green {
    color: #3fa95b;
}
.rail-grid {
    margin-top: -2px;
}
.rail-bottom {
    margin-top: auto;
    display: flex;
    flex-direction: column;
    align-items: center;
    gap: 17px;
}
.rail-help {
    font-size: 19px;
    line-height: 24px;
    color: #d8d9dd;
}

/* agent panel */
.agent {
    width: 516px;
    flex: none;
    margin-bottom: 9px;
    border-radius: 6px;
    background: #191c25;
    display: flex;
    flex-direction: column;
    overflow: hidden;
}
.agent-tabs {
    height: 38px;
    flex: none;
    border-bottom: 1px solid #262932;
    display: flex;
}
.agent-tab {
    width: 110px;
    background: #1c1f29;
    border-right: 1px solid #2a2d37;
    display: flex;
    align-items: center;
    gap: 7px;
    padding-left: 7px;
    font-size: 15.500px;
    color: #f0f0f2;
}
.agent-tab svg {
    color: #8a73f0;
}
.saved-bar {
    height: 38px;
    flex: none;
    margin: 10px 10px 0;
    padding: 0 10px 0 9px;
    border-radius: 5px;
    background: #23262e;
    display: flex;
    align-items: center;
    justify-content: space-between;
    font-size: 14.500px;
    color: #e6e7ea;
}
.saved-text {
    display: flex;
    align-items: center;
    gap: 10px;
}
.chat {
    flex: 1;
    min-height: 0;
    overflow: hidden;
    display: flex;
    flex-direction: column;
    justify-content: flex-end;
    padding: 0 10px 28px;
    font-size: 17px;
    line-height: 26.900px;
}
.info-card {
    position: relative;
    flex: none;
    padding: 0 6px 14px 44px;
    border: 1px solid #0a4a85;
    border-top: 0;
    border-radius: 0 0 10px 10px;
    background: linear-gradient(90deg, #14283f, #1c1f2b);
    color: #e4e5e9;
}
.info-fade {
    position: absolute;
    left: 0;
    right: 0;
    top: 0;
    height: 24px;
    background: linear-gradient(rgba(25, 28, 37, 0.75), rgba(25, 28, 37, 0));
}
.learn-btn {
    display: inline-block;
    margin-top: 11px;
    height: 38px;
    line-height: 36px;
    padding: 0 9px;
    border: 1px solid #30333d;
    border-radius: 4px;
    background: #1a1d27;
    font-size: 17px;
}
.msg-card {
    flex: none;
    margin: 24px -2px 0;
    padding: 10px 16px 10px 16px;
    border-radius: 10px;
    background: #2d2948;
    color: #ecebf3;
}
.msg-card p + p {
    margin-top: 19px;
}
.composer {
    flex: none;
    height: 123px;
    margin: 0 10px 9px;
    border: 1px solid #2d3039;
    border-radius: 10px;
    background: #23262f;
}
.composer-status {
    height: 33px;
    padding: 1px 0 0 16px;
    border-bottom: 1px solid #2d3039;
    font-size: 14.300px;
    font-weight: 500;
    line-height: 30px;
    color: #a3a5ac;
}
.composer-input {
    height: 49px;
    padding: 13px 0 0 11px;
    font-size: 16.600px;
    color: #80838b;
}
.composer-tools {
    display: flex;
    align-items: center;
    padding: 3px 6px 0 11px;
    color: #94969e;
    font-size: 15px;
    font-weight: 500;
}
.composer-edit {
    display: flex;
    align-items: center;
    gap: 5px;
    margin: 0 14px 0 17px;
}
.composer-send {
    margin-left: auto;
    width: 30px;
    height: 30px;
    border-radius: 5px;
    background: #2b2e38;
    display: flex;
    align-items: center;
    justify-content: center;
}
.splitter {
    width: 8px;
    flex: none;
}

/* preview panel */
.preview {
    width: 1329px;
    flex: none;
    margin-bottom: 9px;
    border-radius: 6px 6px 0 0;
    background: #191c25;
    display: flex;
    flex-direction: column;
    overflow: hidden;
}
.preview-tabs {
    height: 38px;
    flex: none;
    border-bottom: 1px solid #262932;
    display: flex;
    align-items: stretch;
    font-size: 15.500px;
}
.ptab {
    width: 126px;
    padding-left: 7px;
    border-right: 1px solid #2a2d37;
    display: flex;
    align-items: center;
    gap: 9px;
    color: #a6a8ae;
}
.ptab-active {
    background: #1c1f29;
    color: #f0f0f2;
}
.ptab:nth-child(3) {
    width: 122px;
    padding-left: 8px;
}
.ptab-plus {
    margin-left: 12px;
    display: flex;
    align-items: center;
}
.ptab-more {
    margin: auto 18px auto auto;
}
.webbar {
    height: 44px;
    flex: none;
    background: #1d2029;
    display: flex;
    align-items: center;
    gap: 15px;
    padding: 0 10px 0 10px;
    border-bottom: 1px solid #14161f;
}
.web-reload {
    margin-left: 2px;
}
.web-tool {
    margin-left: -2px;
}
.web-url {
    width: 1125px;
    height: 29px;
    margin: 0 -5px 0 -7px;
    border-radius: 5px;
    background: #24272f;
    display: flex;
    align-items: center;
    gap: 6px;
    padding: 0 8px 0 3px;
    font-size: 16px;
    color: #e6e7ea;
}
.web-host {
    color: #4cb96c;
}
.web-go {
    margin-left: auto;
}
.banner {
    height: 42px;
    flex: none;
    background: #004384;
    color: #b9d4f0;
    display: flex;
    align-items: center;
    padding: 0 13px 0 7px;
    font-size: 14.700px;
}
.banner-text {
    margin-left: 10px;
}
.banner-btn {
    height: 33px;
    margin-left: 7px;
    padding: 0 8px;
    border-radius: 4px;
    background: #0053a6;
    color: #e4eefb;
    display: flex;
    align-items: center;
    gap: 7px;
    font-size: 14.800px;
}
.banner-close {
    margin-left: auto;
    margin-right: 2px;
    color: #cfe0f4;
}

/* the site inside the preview */
.site {
    position: relative;
    flex: 1;
    min-height: 0;
    overflow: hidden;
    background: #fcfbf7;
    border-left: 1px solid #fff;
    border-right: 7px solid #fff;
    font-family: Inter, sans-serif;
    color: #111;
}
.site-inner {
    width: 1036px;
    margin-left: 141px;
    display: flex;
    flex-direction: column;
    gap: 39px;
}
.site-card {
    background: #fff;
    border: 1px solid #e8e8e6;
    border-radius: 10px;
    box-shadow: 0 1px 2px rgba(0, 0, 0, 0.06);
}
.suggest-card {
    height: 316px;
    border-top: 0;
    border-radius: 0 0 10px 10px;
    padding: 25px 28px 0;
}
.suggest-grid {
    display: grid;
    grid-template-columns: 482px 482px;
    gap: 14px 14px;
}
.suggest {
    height: 55px;
    border: 1px solid #e4e4e4;
    border-radius: 6px;
    display: flex;
    align-items: center;
    gap: 20px;
    padding-left: 14px;
    padding-bottom: 1px;
    font-size: 17.600px;
    font-weight: 500;
}
.ask-card {
    height: 118px;
    padding: 20px 19px 0;
}
.ask-row {
    display: flex;
    gap: 15px;
}
.ask-input {
    flex: 1;
    height: 48px;
    border: 1px solid #e4e4e4;
    border-radius: 6px;
    padding-left: 15px;
    font-size: 17.500px;
    line-height: 46px;
}
.ask-send {
    width: 57px;
    height: 48px;
    border-radius: 6px;
    background: linear-gradient(90deg, #7c3aed, #2f6fe8);
    display: flex;
    align-items: center;
    justify-content: center;
}
.ask-note {
    margin-top: 9px;
    text-align: center;
    font-size: 15px;
    color: #8a8a90;
}
.history-card {
    height: 300px;
    padding: 27px 28px 0;
}
.history-title {
    margin: 0;
    display: flex;
    align-items: center;
    gap: 8px;
    font-size: 30px;
    font-weight: 700;
    line-height: 40px;
    letter-spacing: -0.9px;
}
.history-sub {
    margin-top: 8px;
    font-size: 17.500px;
    color: #77777d;
}
.history-item {
    margin-top: 31px;
    height: 120px;
    padding: 16px 15px 0;
    border: 1px solid #e4e4e4;
    border-radius: 6px;
}
.history-q {
    font-size: 17.700px;
    font-weight: 400;
}
.history-date {
    margin-top: 6px;
    font-size: 13.500px;
    color: #77777d;
}
.chat-fab {
    position: absolute;
    left: 1230px;
    top: 535px;
    width: 64px;
    height: 64px;
    border-radius: 50%;
    background: linear-gradient(135deg, #7c3aed, #2f6fe8);
}
.toast {
    position: absolute;
    left: 834px;
    top: 542px;
    width: 466px;
    height: 137px;
    padding: 30px 30px 0;
    border-radius: 6px;
    background: #ef4444;
    color: #fff;
    box-shadow: 0 8px 20px rgba(0, 0, 0, 0.15);
}
.toast-title {
    font-size: 17.500px;
    font-weight: 700;
    line-height: 24px;
}
.toast-msg {
    margin-top: 5px;
    font-size: 17.600px;
    line-height: 24px;
}

/* windows taskbar */
.taskbar {
    height: 60px;
    flex: none;
    display: flex;
    align-items: center;
    background: linear-gradient(90deg, #d6dfd2, #dbe5c0 45%, #e0e8b0 62%, #d8e3c4 85%, #d8e3d0);
    font-family: "Noto Sans", sans-serif;
    color: #111;
}
.win-logo {
    margin-left: 24px;
    flex: none;
}
.search-box {
    width: 432px;
    height: 58px;
    margin-left: 24px;
    flex: none;
    background: #fff;
    border: 2px solid #cfcfcf;
    display: flex;
    align-items: center;
    padding-left: 17px;
}
.search-text {
    margin-left: 15px;
    padding-top: 3px;
    font-size: 21px;
}
.search-art {
    margin-left: auto;
    margin-right: 9px;
}
.task-view {
    margin-left: 24px;
    flex: none;
}
.apps {
    margin-left: 29px;
    display: flex;
    flex: none;
}
.app-slot {
    position: relative;
    width: 62.700px;
    height: 60px;
    display: flex;
    align-items: center;
    justify-content: center;
}
.app-open::after {
    content: "";
    position: absolute;
    bottom: 0;
    left: 7px;
    right: 7px;
    height: 3px;
    background: #0078d4;
}
.app-active {
    background: rgba(255, 255, 255, 0.55);
}
.chrome-ico {
    position: relative;
    display: block;
    width: 36px;
    height: 36px;
    border-radius: 50%;
    background:
        radial-gradient(circle, #3f80ee 0 7px, #fff 7.500px 9px, transparent 9.500px),
        conic-gradient(#ea4335 90deg, #fbbc04 90deg 210deg, #34a853 210deg 330deg, #ea4335 330deg);
}
.chrome-badge {
    position: absolute;
    right: -5px;
    bottom: -3px;
    width: 23px;
    height: 23px;
    border-radius: 50%;
    color: #f0e6e8;
    font-size: 12px;
    font-weight: 500;
    font-style: normal;
    display: flex;
    align-items: center;
    justify-content: center;
}
.badge-photo {
    background: radial-gradient(circle at 40% 35%, #c9a58f, #7a3a2c 60%, #4c5c66);
}
.badge-c {
    background: #8d7368;
}
.badge-h {
    background: #c2185b;
}
.badge-d {
    background: #5a4033;
}
.badge-e {
    background: #6fa13c;
}
.weather {
    margin-left: 42px;
    display: flex;
    align-items: center;
    flex: none;
}
.weather-ico {
    position: relative;
    width: 30px;
    height: 38px;
    border-radius: 50%;
    background: linear-gradient(160deg, #ffc800, #e06a00);
}
.weather-badge {
    position: absolute;
    right: -4px;
    top: -3px;
    width: 18px;
    height: 18px;
    border-radius: 50%;
    background: #c8281e;
    color: #fff;
    font-size: 11px;
    display: flex;
    align-items: center;
    justify-content: center;
}
.weather-temp {
    margin-left: 15px;
    font-size: 20px;
}
.tray {
    margin-left: 40px;
    width: 164px;
    display: flex;
    align-items: center;
    justify-content: space-between;
    flex: none;
}
.lang,
.clock {
    display: flex;
    flex-direction: column;
    align-items: center;
    gap: 4px;
    font-size: 17.500px;
    line-height: 24px;
    flex: none;
}
.lang {
    margin-left: 9px;
}
.clock {
    margin-left: 11px;
    width: 105px;
}
.notif {
    margin-left: 23px;
    flex: none;
}
```
